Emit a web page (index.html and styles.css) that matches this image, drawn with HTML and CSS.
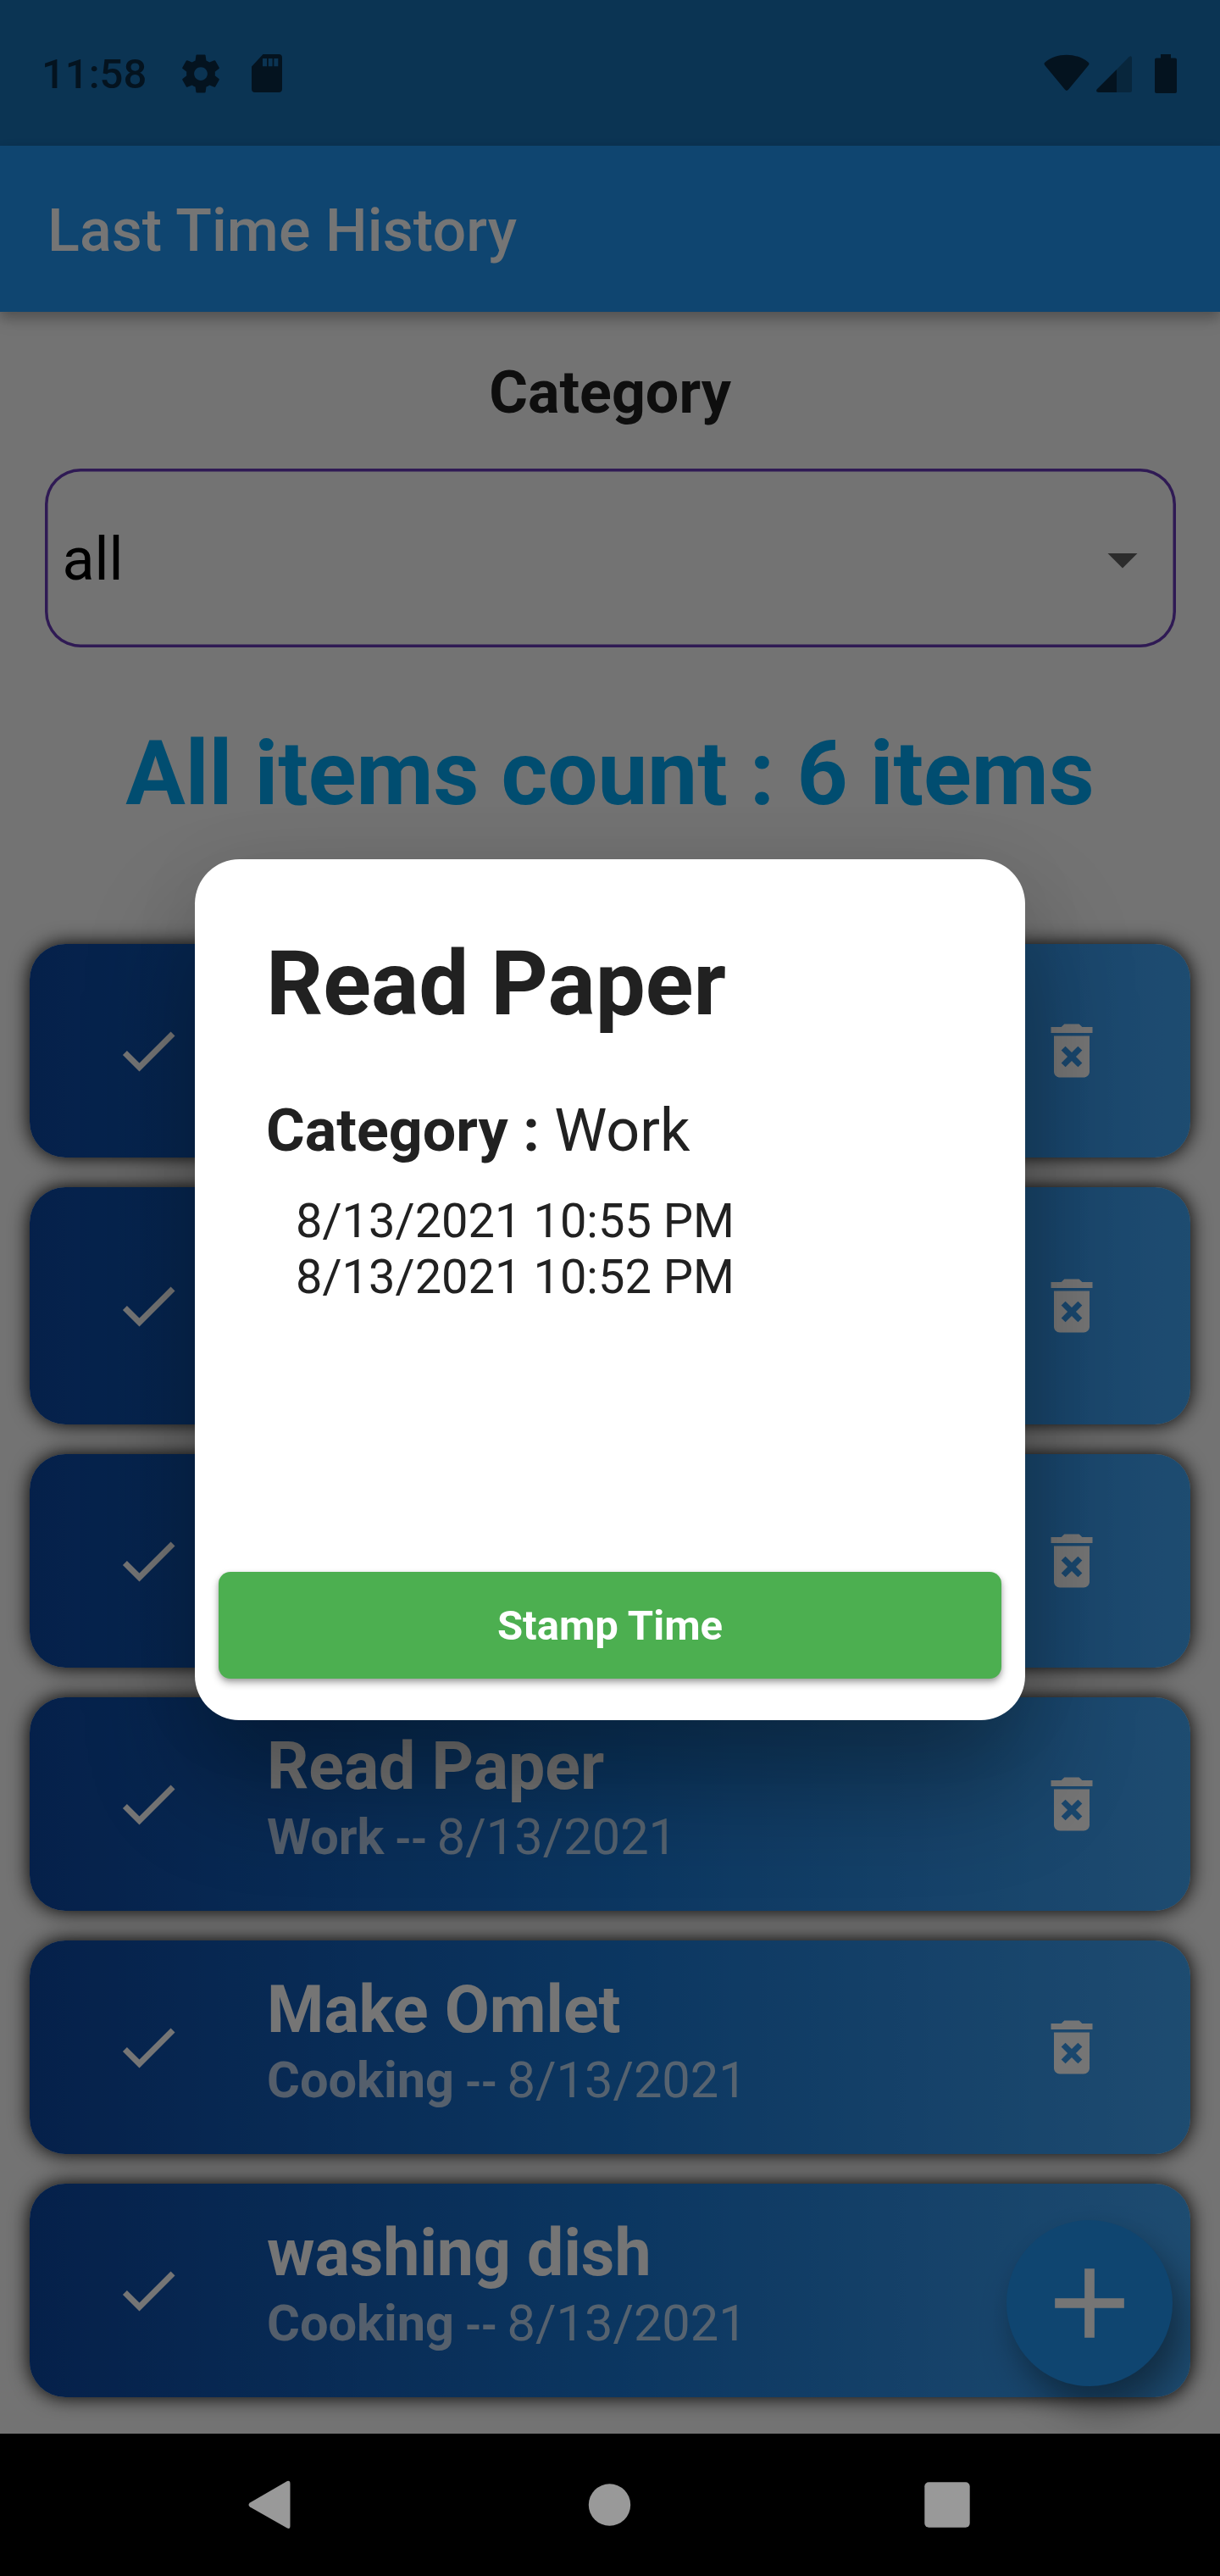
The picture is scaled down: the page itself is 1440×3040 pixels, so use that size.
FILE: index.html
```html
<!DOCTYPE html>
<html lang="en">
<head>
<meta charset="utf-8">
<title>Last Time History</title>
<link rel="stylesheet" href="styles.css">
</head>
<body>
<svg class="sprite" aria-hidden="true">
  <symbol id="check" viewBox="0 0 24 24"><path d="M9 16.17L4.83 12l-1.42 1.41L9 19 21 7l-1.41-1.41z"/></symbol>
  <symbol id="trash" viewBox="0 0 24 24"><path d="M6 19c0 1.1.9 2 2 2h8c1.1 0 2-.9 2-2V7H6v12zm2.46-7.12l1.41-1.41L12 12.59l2.12-2.12 1.41 1.41L13.41 14l2.12 2.12-1.41 1.41L12 15.41l-2.12 2.12-1.41-1.41L10.59 14l-2.13-2.12zM15.5 4l-1-1h-5l-1 1H5v2h14V4z"/></symbol>
</svg>
<div class="phone">
  <div class="app">
    <div class="status-bar">
      <span class="clock">11:58</span>
      <svg class="gear" viewBox="0 0 24 24"><path d="M19.43 12.98c.04-.32.07-.64.07-.98s-.03-.66-.07-.98l2.11-1.65c.19-.15.24-.42.12-.64l-2-3.46c-.12-.22-.39-.3-.61-.22l-2.49 1c-.52-.4-1.08-.73-1.69-.98l-.38-2.65C14.46 2.18 14.25 2 14 2h-4c-.25 0-.46.18-.49.42l-.38 2.65c-.61.25-1.17.59-1.69.98l-2.49-1c-.23-.09-.49 0-.61.22l-2 3.46c-.13.22-.07.49.12.64l2.11 1.65c-.04.32-.07.65-.07.98s.03.66.07.98l-2.11 1.65c-.19.15-.24.42-.12.64l2 3.46c.12.22.39.3.61.22l2.49-1c.52.4 1.08.73 1.69.98l.38 2.65c.03.24.24.42.49.42h4c.25 0 .46-.18.49-.42l.38-2.65c.61-.25 1.17-.59 1.69-.98l2.49 1c.23.09.49 0 .61-.22l2-3.46c.12-.22.07-.49-.12-.64l-2.11-1.65zM12 15.5c-1.93 0-3.5-1.57-3.5-3.5s1.57-3.5 3.5-3.5 3.5 1.57 3.5 3.5-1.57 3.5-3.5 3.5z"/></svg>
      <svg class="sd" viewBox="0 0 36 45"><path fill-rule="evenodd" d="M13.500 0H32a4 4 0 0 1 4 4V41a4 4 0 0 1-4 4H4a4 4 0 0 1-4-4V14.500zM13 5v9.300h5V5zm6.800 0v9.300h4.800V5zm6.600 0v9.300h4.900V5z"/></svg>
      <div class="signals">
        <svg class="wifi" viewBox="0 0 54 44"><path d="M1.500 9.500C8 4 17 .7 27 .7S46 4 52.500 9.500Q54.300 11 52.800 13L29 41.800Q27 44 25 41.800L1.200 13Q-.3 11 1.500 9.500z"/></svg>
        <svg class="cell" viewBox="0 0 42 43"><path class="faint" d="M24 16L38.500 1.200Q41.500-.8 42 2V41Q42 43 40 43H24z"/><path d="M24 16V43H2.500Q-1 42.500 .6 39.500z"/></svg>
        <svg class="battery" viewBox="0 0 26 46"><path d="M7 0H19V4.500H24Q26 4.500 26 6.500V44Q26 46 24 46H2Q0 46 0 44V6.500Q0 4.500 2 4.500H7z"/></svg>
      </div>
    </div>
    <header class="app-bar"><h1>Last Time History</h1></header>
    <main>
      <h2 class="label">Category</h2>
      <div class="select"><span>all</span><svg class="caret" viewBox="0 0 24 24"><path d="M7 10l5 5 5-5z"/></svg></div>
      <p class="count">All items count : 6 items</p>
      <ul class="list">
        <li class="card"><svg class="icon"><use href="#check"/></svg><svg class="icon"><use href="#trash"/></svg></li>
        <li class="card tall"><svg class="icon"><use href="#check"/></svg><svg class="icon"><use href="#trash"/></svg></li>
        <li class="card"><svg class="icon"><use href="#check"/></svg><svg class="icon"><use href="#trash"/></svg></li>
        <li class="card"><svg class="icon"><use href="#check"/></svg><div class="info"><h3>Read Paper</h3><p><b>Work</b> <span class="dash">--</span> 8/13/2021</p></div><svg class="icon"><use href="#trash"/></svg></li>
        <li class="card"><svg class="icon"><use href="#check"/></svg><div class="info"><h3>Make Omlet</h3><p><b>Cooking</b> <span class="dash">--</span> 8/13/2021</p></div><svg class="icon"><use href="#trash"/></svg></li>
        <li class="card"><svg class="icon"><use href="#check"/></svg><div class="info"><h3>washing dish</h3><p><b>Cooking</b> <span class="dash">--</span> 8/13/2021</p></div></li>
      </ul>
    </main>
    <div class="fab"><svg viewBox="0 0 24 24"><path d="M19 13h-6v6h-2v-6H5v-2h6V5h2v6h6v2z"/></svg></div>
    <div class="scrim">
      <section class="dialog">
        <h2>Read Paper</h2>
        <p class="category"><b>Category :</b> Work</p>
        <div class="times"><p>8/13/2021 10:55 PM</p><p>8/13/2021 10:52 PM</p></div>
        <div class="button">Stamp Time</div>
      </section>
    </div>
  </div>
  <nav class="nav-bar">
    <svg viewBox="0 0 56 56"><path d="M49 0Q52.500-1 52.500 3V53Q52.500 57 49 55.500L5 30.500Q2 28 5 25.500z"/></svg>
    <svg viewBox="0 0 56 56"><circle cx="29.500" cy="28" r="24.700"/></svg>
    <svg viewBox="0 0 56 56"><rect x="1.300" y="1.300" width="53.400" height="53.400" rx="5"/></svg>
  </nav>
</div>
</body>
</html>
```
FILE: styles.css
```css
* { box-sizing: border-box; margin: 0; padding: 0; }
body { font-family: Roboto, "Liberation Sans", sans-serif; background: #000; }
svg { display: block; flex: none; overflow: visible; }
.sprite { position: absolute; width: 0; height: 0; }
.phone { width: 1440px; height: 3040px; display: flex; flex-direction: column; }
.app { position: relative; height: 2872px; display: flex; flex-direction: column; background: #fafafa; overflow: hidden; }

.status-bar { height: 172px; padding: 1px 51px 0 49px; display: flex; align-items: center; background: #1971b6; fill: #092a44; color: #092a44; z-index: 1; }
.clock { width: 161px; padding-top: 3px; font-size: 49px; line-height: 58px; font-weight: 500; white-space: nowrap; }
.gear { width: 54px; height: 54px; }
.sd { width: 36px; height: 45px; margin-left: 33px; }
.signals { display: flex; margin-left: auto; }
.wifi { width: 54px; height: 44px; }
.cell { width: 42px; height: 43px; margin: 2px 0 0 8px; }
.battery { width: 26px; height: 46px; margin-left: 27px; }
.faint { fill: #125484; }

.app-bar { height: 196px; padding: 4px 56px 0; display: flex; align-items: center; background: #2196f3; color: #fff; box-shadow: 0 7px 14px rgba(0,0,0,.22), 0 10px 20px rgba(0,0,0,.1); z-index: 1; }
.app-bar h1 { font-size: 70px; line-height: 82px; font-weight: 500; letter-spacing: .1px; }

main { padding-top: 54px; }
.label { font-size: 70px; line-height: 82px; text-align: center; color: #202020; }
.select { height: 210.500px; margin: 49px 52.500px 0; padding: 4px 21px 0; display: flex; align-items: center; justify-content: space-between; border-radius: 42px; box-shadow: inset 0 0 0 3.500px #673ab7; font-size: 70px; line-height: 82px; color: #000; }
.caret { width: 84px; height: 84px; fill: #616161; }
.count { margin-top: 88px; font-size: 105px; line-height: 123px; font-weight: 700; text-align: center; color: #03a9f4; white-space: nowrap; }
.list { margin: 139.500px 35px 0; list-style: none; display: flex; flex-direction: column; gap: 35px; }
.card { height: 252px; padding: 0 98px; display: flex; align-items: center; justify-content: space-between; border-radius: 42px; background: linear-gradient(90deg, #0d47a1, #1976d2, #42a5f5); box-shadow: 0 0 23.700px #000; color: #fff; fill: #fff; }
.card.tall { height: 280px; }
.icon { width: 84px; height: 84px; }
.info { flex: 1; align-self: flex-start; padding: 37px 0 0 98px; white-space: nowrap; }
.info h3 { font-size: 77px; line-height: 90px; }
.info p { margin-top: 3px; font-size: 59.500px; line-height: 70px; color: rgba(255,255,255,.7); }
.dash { display: inline-block; width: 33px; margin-left: -2px; margin-right: 2px; font-weight: 700; font-size: 50px; line-height: 1; letter-spacing: -1px; }

.fab { position: absolute; right: 56px; bottom: 56px; width: 196px; height: 196px; display: flex; align-items: center; justify-content: center; border-radius: 50%; background: #2196f3; fill: #fff; box-shadow: 14px 28px 44px rgba(0,0,0,.36), 2px 6px 24px rgba(0,0,0,.06); }
.fab svg { width: 140px; height: 140px; }

.scrim { position: absolute; inset: 0; z-index: 2; padding-top: 172px; display: flex; align-items: center; justify-content: center; background: rgba(0,0,0,.54); }
.dialog { width: 980px; height: 1015.500px; padding: 86px 28px 49px; display: flex; flex-direction: column; border-radius: 52.500px; background: #fff; color: #212121; box-shadow: 0 74px 130px rgba(0,0,0,.32), 0 10px 90px rgba(0,0,0,.06); }
.dialog h2 { padding-left: 56px; font-size: 105px; line-height: 123px; }
.category { margin-top: 70px; padding-left: 56px; font-size: 70px; line-height: 82px; }
.times { margin-top: 33px; padding-left: 91px; font-size: 56px; line-height: 66px; }
.button { height: 126px; margin-top: auto; padding-top: 1px; display: flex; align-items: center; justify-content: center; border-radius: 14px; background: #4caf50; color: #fff; font-size: 49px; font-weight: 700; box-shadow: 0 5px 10px rgba(0,0,0,.3), 0 2px 5px rgba(0,0,0,.15); }

.nav-bar { height: 168px; padding: 0 294px 0 290px; display: flex; align-items: center; justify-content: space-between; fill: #999; }
.nav-bar svg { width: 56px; height: 56px; }
```
